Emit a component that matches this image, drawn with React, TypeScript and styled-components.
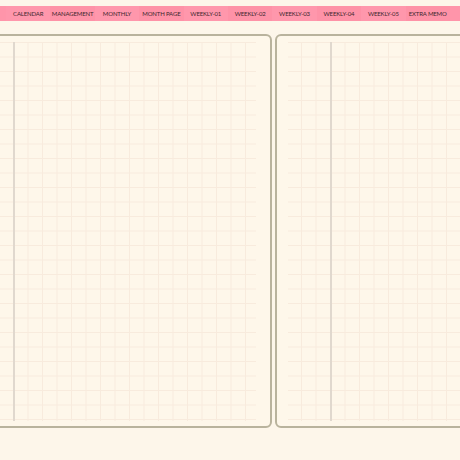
import React from "react";
import styled, { createGlobalStyle } from "styled-components";

const tabs = [
  "CALENDAR",
  "MANAGEMENT",
  "MONTHLY",
  "MONTH PAGE",
  "WEEKLY-01",
  "WEEKLY-02",
  "WEEKLY-03",
  "WEEKLY-04",
  "WEEKLY-05",
  "EXTRA MEMO",
];

const GlobalStyle = createGlobalStyle`
  html, body {
    margin: 0;
    padding: 0;
    background: #fdf6ea;
  }
  body {
    font-family: "Lato", "Open Sans", sans-serif;
  }
`;

const Screen = styled.div`
  width: 460px;
  height: 460px;
  overflow: hidden;
  background: #fdf6ea;
  padding-top: 6px;
  box-sizing: border-box;
`;

const TabBar = styled.div`
  display: flex;
  height: 15px;
  background: #ff95aa;
  padding-left: 6px;
`;

const Tab = styled.div<{ $alt: boolean }>`
  width: 44.4px;
  flex: none;
  display: flex;
  align-items: center;
  justify-content: center;
  font-size: 6px;
  letter-spacing: -0.15px;
  color: #40272e;
  background: ${(p) => (p.$alt ? "#fe92a7" : "#ff97ac")};
  white-space: nowrap;
`;

const Spread = styled.div`
  display: flex;
  gap: 3px;
  margin-top: 13px;
  margin-left: -10px;
`;

const Page = styled.div<{ $side: "left" | "right" }>`
  flex: none;
  width: ${(p) => (p.$side === "left" ? "282px" : "200px")};
  height: 394px;
  box-sizing: border-box;
  border: 2px solid #b9b39d;
  border-radius: ${(p) => (p.$side === "left" ? "0 6px 6px 0" : "6px 0 0 6px")};
  background: #fef7ea;
  padding: ${(p) => (p.$side === "left" ? "6px 14px 5px 8px" : "6px 0 5px 11px")};
`;

const Grid = styled.div<{ $margin: number }>`
  position: relative;
  height: 100%;
  background-image:
    linear-gradient(to right, #f8ebdd 1px, transparent 1px),
    linear-gradient(to bottom, #f8ebdd 1px, transparent 1px);
  background-size: 14.5px 14.5px;
  background-position: ${(p) => p.$margin % 14.5}px 0;

  &::before {
    content: "";
    position: absolute;
    top: 0;
    bottom: 0;
    left: ${(p) => p.$margin}px;
    width: 2px;
    background: #e0d8ce;
  }
`;

export default function App() {
  return (
    <>
      <GlobalStyle />
      <Screen>
        <TabBar>
          {tabs.map((t, i) => (
            <Tab key={t} $alt={i % 2 === 1}>
              {t}
            </Tab>
          ))}
        </TabBar>
        <Spread>
          <Page $side="left">
            <Grid $margin={13} />
          </Page>
          <Page $side="right">
            <Grid $margin={42} />
          </Page>
        </Spread>
      </Screen>
    </>
  );
}
